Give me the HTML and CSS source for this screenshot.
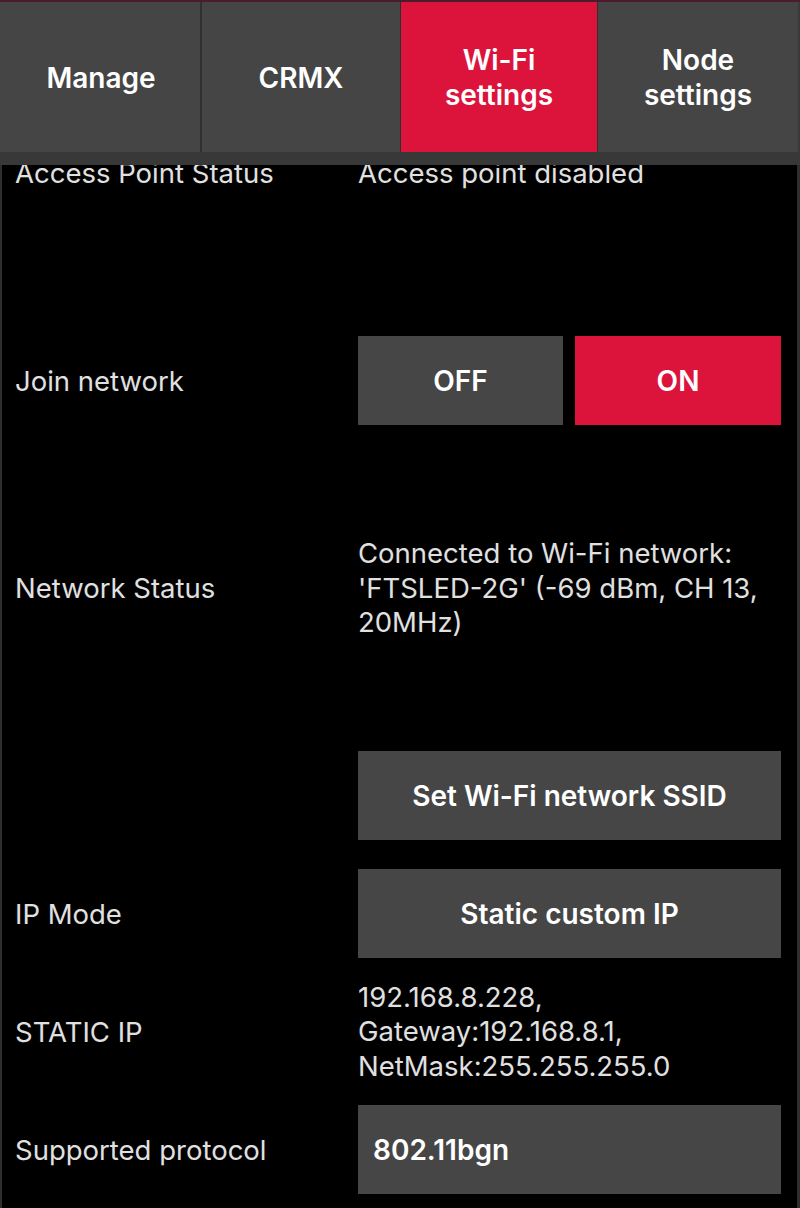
FILE: index.html
```html
<!DOCTYPE html>
<html lang="en">
<head>
<meta charset="utf-8">
<title>Wi-Fi settings</title>
<link rel="stylesheet" href="styles.css">
</head>
<body>
<header class="topbar">
  <nav class="tabs">
    <div class="tab">Manage</div>
    <div class="tab">CRMX</div>
    <div class="tab tab-active">Wi-Fi<br>settings</div>
    <div class="tab">Node<br>settings</div>
  </nav>
  <div class="strip"></div>
</header>
<main class="content">
  <section class="row row-tall">
    <div class="label">Access Point Status</div>
    <div class="value">Access point disabled</div>
  </section>
  <section class="row">
    <div class="label">Join network</div>
    <div class="toggle">
      <div class="btn">OFF</div>
      <div class="btn btn-on">ON</div>
    </div>
  </section>
  <section class="row row-tall">
    <div class="label">Network Status</div>
    <div class="value">Connected to Wi-Fi network: 'FTSLED-2G' (-69 dBm, CH 13, 20MHz)</div>
  </section>
  <section class="row">
    <div class="label"></div>
    <div class="btn">Set Wi-Fi network SSID</div>
  </section>
  <section class="row">
    <div class="label">IP Mode</div>
    <div class="btn">Static custom IP</div>
  </section>
  <section class="row row-text">
    <div class="label">STATIC IP</div>
    <div class="value">192.168.8.228,<br>Gateway:192.168.8.1,<br>NetMask:255.255.255.0</div>
  </section>
  <section class="row">
    <div class="label">Supported protocol</div>
    <div class="btn btn-left">802.11bgn</div>
  </section>
</main>
</body>
</html>
```
FILE: styles.css
```css
* { box-sizing: border-box; }
html, body {
  margin: 0;
  padding: 0;
  background: #000;
}
body {
  font-family: Inter, "Open Sans", "Liberation Sans", sans-serif;
  color: #dedede;
  width: 800px;
  height: 1208px;
  overflow: hidden;
}
.topbar {
  position: sticky;
  top: 0;
  z-index: 2;
  background: #3a3a3a;
  border-top: 2px solid #4d1b2b;
}
.tabs {
  display: grid;
  grid-template-columns: 200px 200px 198px 202px;
  height: 150px;
}
.tab {
  display: flex;
  align-items: center;
  justify-content: center;
  text-align: center;
  background: #454545;
  color: #fff;
  font-weight: 600;
  font-size: 28px;
  line-height: 35px;
  padding-top: 2px;
  border-left: 2px solid #303030;
}
.tab:first-child { border-left: none; padding-left: 2px; }
.tab-active {
  background: #dc143c;
  border-left: 1px solid #303030;
  border-right: 1px solid #303030;
}
.tab-active + .tab { border-left: none; margin-right: 2px; }
.strip {
  height: 13px;
  background: #383838;
}
.content {
  margin-top: -140.5px;
  border-left: 2px solid #2e2e2e;
  border-right: 3px solid #2e2e2e;
  min-height: 1400px;
}
.row {
  display: grid;
  grid-template-columns: 343px 423px;
  align-items: center;
  padding: 14.5px 0 14.5px 13px;
  min-height: 118px;
}
.row-tall { min-height: 297px; }
.row-text { padding-top: 7px; padding-bottom: 7px; }
.label {
  font-size: 27.5px;
  color: #e0e0e0;
}
.value {
  font-size: 27.5px;
  line-height: 34.5px;
  color: #e0e0e0;
}
.toggle {
  display: grid;
  grid-template-columns: 205px 206px;
  gap: 12px;
}
.btn {
  height: 89px;
  display: flex;
  align-items: center;
  justify-content: center;
  background: #464646;
  color: #fff;
  font-weight: 600;
  font-size: 28px;
}
.btn-on { background: #dc143c; }
.btn-left { justify-content: flex-start; padding-left: 15px; }
```
